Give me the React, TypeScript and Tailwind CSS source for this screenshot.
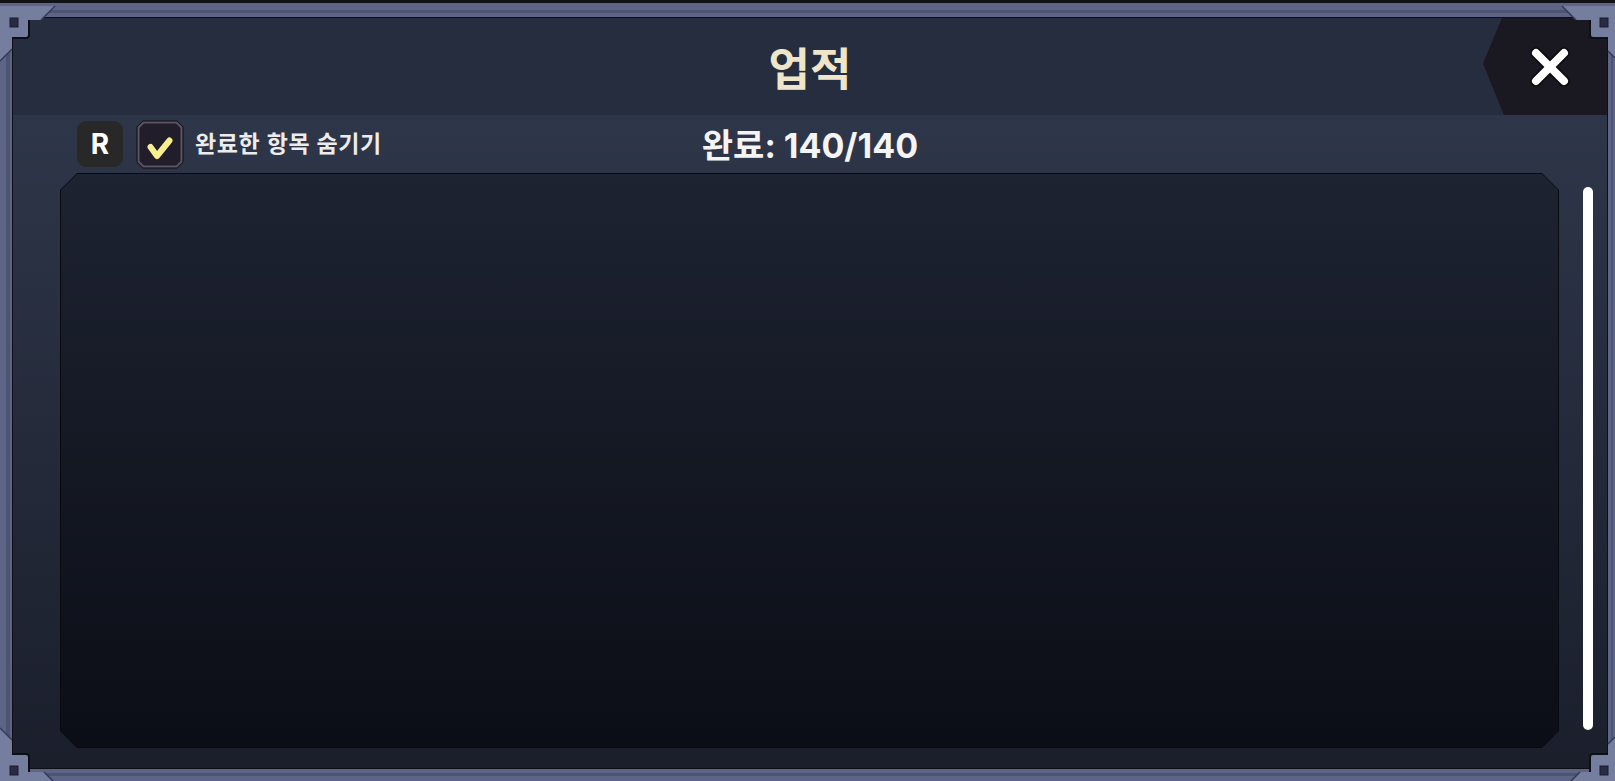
const CHAMFER_OUT =
  "[clip-path:polygon(17px_0,calc(100%_-_17px)_0,100%_17px,100%_calc(100%_-_17px),calc(100%_-_17px)_100%,17px_100%,0_calc(100%_-_17px),0_17px)]";
const CHAMFER_IN =
  "[clip-path:polygon(16px_0,calc(100%_-_16px)_0,100%_16px,100%_calc(100%_-_16px),calc(100%_-_16px)_100%,16px_100%,0_calc(100%_-_16px),0_16px)]";

// Frame corner brackets drawn over the panel edges
const FrameCorners = () => (
  <svg
    className="pointer-events-none absolute left-0 top-0"
    width={1615}
    height={781}
    viewBox="0 0 1615 781"
  >
    <g fill="#767e9f">
      <polygon points="0,3 55,3 41,17 29,17 29,35 12,35 12,46 0,58" />
      <polygon points="1562,3 1615,3 1615,55 1608,48 1608,35 1590,35 1590,17 1576,17" />
      <polygon points="0,725 12,737 12,751 29,751 29,769 44,769 56,781 0,781" />
      <polygon points="1615,734 1615,781 1568,781 1580,769 1590,769 1590,751 1608,751 1608,741" />
    </g>
    <g stroke="#353a52" strokeWidth={1.5}>
      <line x1={55} y1={3} x2={41} y2={17} />
      <line x1={12} y1={46} x2={0} y2={58} />
      <line x1={1562} y1={3} x2={1576} y2={17} />
      <line x1={1608} y1={48} x2={1615} y2={55} />
      <line x1={0} y1={725} x2={12} y2={737} />
      <line x1={44} y1={769} x2={56} y2={781} />
      <line x1={1580} y1={769} x2={1568} y2={781} />
      <line x1={1608} y1={741} x2={1615} y2={734} />
    </g>
    <g stroke="#0d0f15" strokeWidth={2} fill="none">
      <path d="M29,17 V32 Q29,35 26,35 H12" />
      <path d="M1590,17 V32 Q1590,35 1593,35 H1608" />
      <path d="M12,751 H26 Q29,751 29,754 V769" />
      <path d="M1608,751 H1593 Q1590,751 1590,754 V769" />
    </g>
    <g fill="#282b43" stroke="#1a1c2b" strokeWidth={1}>
      <rect x={10} y={15} width={8} height={9} />
      <rect x={1600} y={15} width={8} height={9} />
      <rect x={10} y={763} width={8} height={9} />
      <rect x={1600} y={763} width={8} height={9} />
    </g>
  </svg>
);

const CloseIcon = () => (
  <svg width={42} height={42} viewBox="0 0 42 42">
    <g strokeLinecap="round">
      <g stroke="#0d0d10" strokeWidth={11.5}>
        <line x1={7} y1={7} x2={35} y2={35} />
        <line x1={35} y1={7} x2={7} y2={35} />
      </g>
      <g stroke="#ffffff" strokeWidth={8}>
        <line x1={7} y1={7} x2={35} y2={35} />
        <line x1={35} y1={7} x2={7} y2={35} />
      </g>
    </g>
  </svg>
);

const CheckBox = () => (
  <svg width={48} height={49} viewBox="0 0 48 49">
    <polygon
      points="7,0.5 41,0.5 47.5,7 47.5,42 41,48.5 7,48.5 0.5,42 0.5,7"
      fill="#0e0c12"
    />
    <polygon
      points="7.5,2.5 40.5,2.5 45.5,7.5 45.5,41.5 40.5,46.5 7.5,46.5 2.5,41.5 2.5,7.5"
      fill="#221d2a"
      stroke="#5b5563"
      strokeWidth={2}
    />
    <path
      d="M14.5,27 L21,36 L33.5,20.5"
      fill="none"
      stroke="#f7ef8f"
      strokeWidth={6}
      strokeLinecap="round"
      strokeLinejoin="round"
    />
  </svg>
);

export default function App() {
  return (
    <div className="relative flex h-[781px] w-[1615px] overflow-hidden border-t-[3px] border-[#101216] bg-[#5d6486] pb-[5px] pl-[6px] pr-[2px] pt-[7px] font-[Inter,'Noto_Sans_CJK_KR',sans-serif]">
      <div className="flex flex-1 border-b-[3px] border-l-[4px] border-r-[2px] border-t-[3px] border-[#4d5372] bg-[#5d6486] pb-[4px] pl-[2px] pr-[3px] pt-[4px]">
        <div className="flex flex-1 flex-col overflow-hidden rounded-[5px] border border-[#0d0f15]">
          {/* Header */}
          <header className="grid h-[97px] shrink-0 grid-cols-[1fr_auto_1fr] bg-[#262d3f]">
            <div />
            <h1 className="self-center pt-[6px] text-[45px] font-bold leading-none text-[#efe5c8]">
              업적
            </h1>
            <button className="flex h-full w-[124px] items-center justify-center justify-self-end bg-[#1a1820] pl-[10px] [clip-path:polygon(19px_0,100%_0,100%_100%,21px_100%,0_47%)]">
              <CloseIcon />
            </button>
          </header>

          <div className="flex flex-1 flex-col bg-linear-to-b from-[#2e3649] to-[#1b1f2c]">
            {/* Toolbar */}
            <div className="grid h-[58px] shrink-0 grid-cols-[1fr_auto_1fr] items-center">
              <div className="flex items-center pl-[64px]">
                <span className="flex h-[46px] w-[46px] items-center justify-center rounded-[9px] bg-[#272827] text-[28px] font-bold text-white">
                  R
                </span>
                <span className="ml-[13px] flex">
                  <CheckBox />
                </span>
                <span className="ml-[11px] text-[23px] font-semibold tracking-[0.6px] text-[#ececec]">
                  완료한 항목 숨기기
                </span>
              </div>
              <div className="pt-[4px] text-[34px] font-bold leading-none text-[#f4f4f4]">
                완료: 140/140
              </div>
              <div />
            </div>

            {/* List area */}
            <div className="flex flex-1 pb-[20px] pl-[47px]">
              <div className={`flex-1 bg-[#080a10] p-px ${CHAMFER_OUT}`}>
                <div className={`h-full bg-linear-to-b from-[#1e2332] to-[#0b0e16] ${CHAMFER_IN}`} />
              </div>
              <div className="ml-[24px] mr-[14px] flex w-[10px] pb-[18px] pt-[14px]">
                <div className="flex-1 rounded-full bg-white" />
              </div>
            </div>
          </div>
        </div>
      </div>
      <FrameCorners />
    </div>
  );
}
